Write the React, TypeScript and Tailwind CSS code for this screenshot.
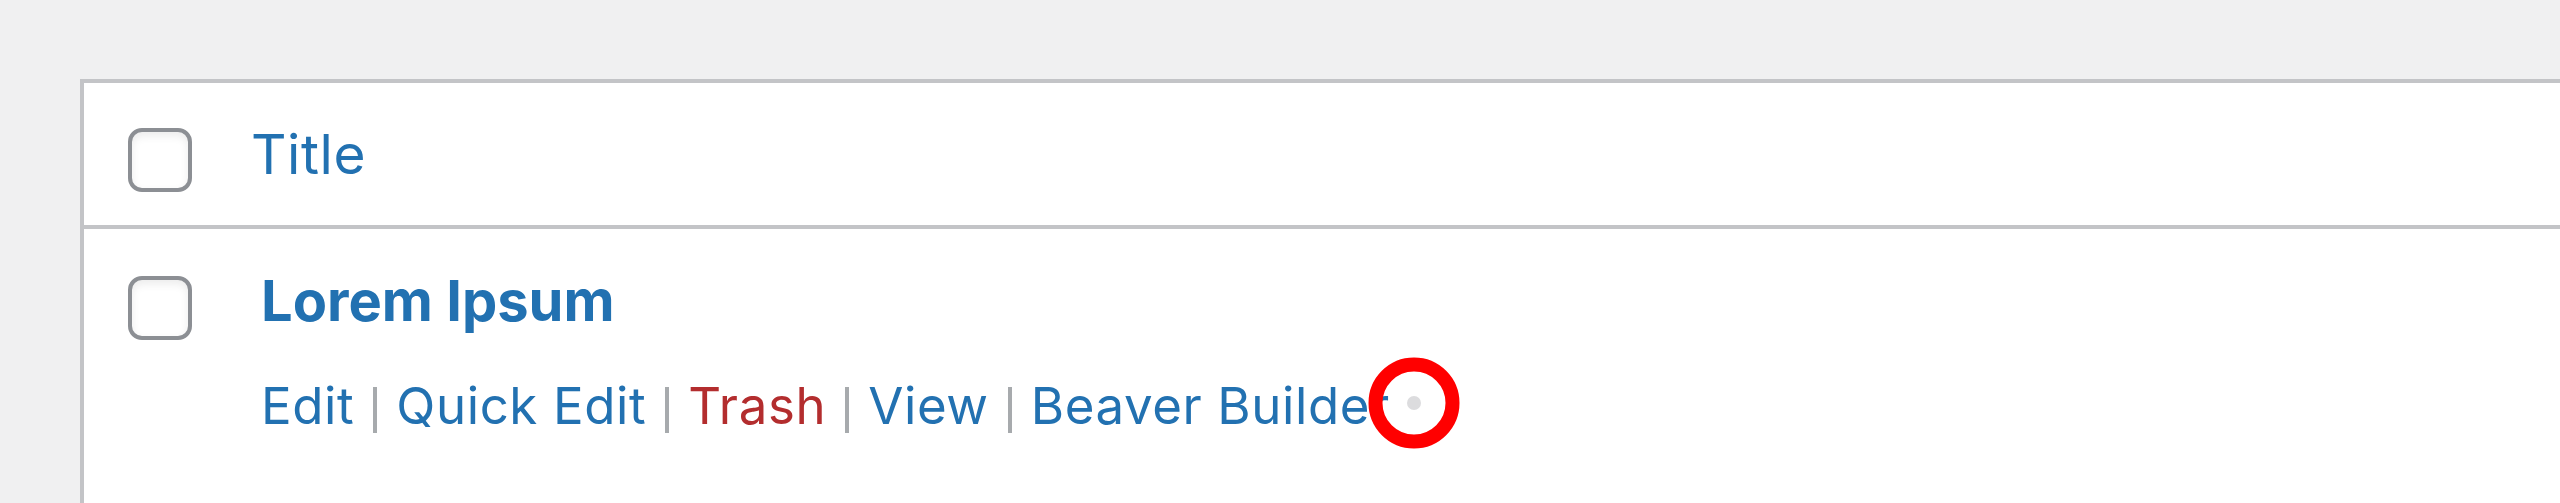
import React from "react";

const Checkbox = () => (
  <div className="w-[64px] h-[64px] shrink-0 rounded-[14px] border-4 border-[#8c8f94] bg-white shadow-[inset_0_4px_8px_rgba(0,0,0,0.08)]" />
);

// row-action divider
const Sep = () => (
  <span className="inline-block w-[4px] h-[46px] mx-[19px] align-[-9px] bg-[#a7aaad]" />
);

export default function App() {
  return (
    <div className="w-full h-[503px] overflow-hidden bg-[#f0f0f1] font-['Inter',sans-serif]">
      <div className="ml-[80px] mt-[79px] bg-white border-t-4 border-l-4 border-[#c3c4c7]">
        {/* Header */}
        <div className="flex h-[146px] pl-[44px] border-b-4 border-[#c3c4c7]">
          <div className="pt-[45px]">
            <Checkbox />
          </div>
          <div className="pt-[44px] pl-[59px]">
            <span className="block text-[55px] leading-none tracking-[0.6px] text-[#2271b1]">Title</span>
          </div>
        </div>

        {/* Row */}
        <div className="flex h-[300px] pl-[44px]">
          <div className="pt-[47px]">
            <Checkbox />
          </div>
          <div className="pt-[44px] pl-[69px] text-[#2271b1]">
            <p className="text-[56px] leading-none font-bold">Lorem Ipsum</p>
            <div className="mt-[51px] text-[51px] leading-none tracking-[0.6px] whitespace-nowrap">
              <span>Edit</span>
              <Sep />
              <span>Quick Edit</span>
              <Sep />
              <span className="text-[#b32d2e]">Trash</span>
              <Sep />
              <span>View</span>
              <Sep />
              <span>Beaver Builder</span>
              <span className="relative ml-[17px] inline-block w-[14px] h-[14px] align-[14px] rounded-full bg-[#dcdcde]">
                <span className="absolute left-1/2 top-1/2 -translate-x-1/2 -translate-y-1/2 w-[91px] h-[91px] rounded-full border-[14px] border-[#ff0000]" />
              </span>
            </div>
          </div>
        </div>
      </div>
    </div>
  );
}
